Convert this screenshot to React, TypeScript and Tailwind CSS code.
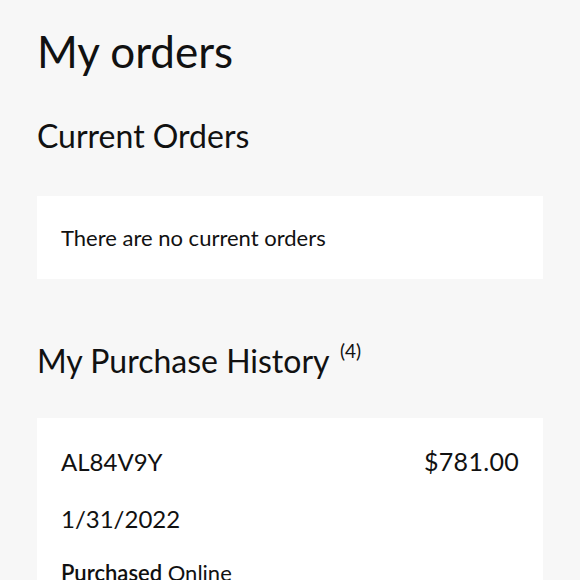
export default function App() {
  return (
    <div
      className="min-h-[580px] bg-[#f7f7f7] px-[37px] text-[#111] overflow-hidden"
      style={{ fontFamily: "Lato, 'Noto Sans', sans-serif" }}
    >
      <h1 className="pt-[25px] text-[44px] leading-[52px]">
        My orders
      </h1>

      <h2 className="mt-[40px] text-[32px] leading-[38px]">
        Current Orders
      </h2>

      {/* Current orders box */}
      <div className="mt-[41px] bg-white h-[83px] flex items-center px-[24px]">
        <p className="text-[22px] leading-[24px]">
          There are no current orders
        </p>
      </div>

      <h2 className="mt-[63px] text-[32px] leading-[38px]">
        My Purchase History{" "}
        <sup className="text-[19px] align-super relative -top-[3px] left-[3px]">(4)</sup>
      </h2>

      {/* Order card */}
      <div className="mt-[38px] bg-white px-[24px] pt-[28px] pb-[20px]">
        <div className="flex justify-between items-baseline text-[24px] leading-[30px]">
          <span>AL84V9Y</span>
          <span className="text-[25px] tracking-[0.3px]">$781.00</span>
        </div>

        <p className="mt-[27px] text-[24px] leading-[30px]">
          1/31/2022
        </p>

        <p className="mt-[25px] text-[22px] leading-[28px]">
          <span className="font-semibold">Purchased</span> Online
        </p>
      </div>
    </div>
  );
}
